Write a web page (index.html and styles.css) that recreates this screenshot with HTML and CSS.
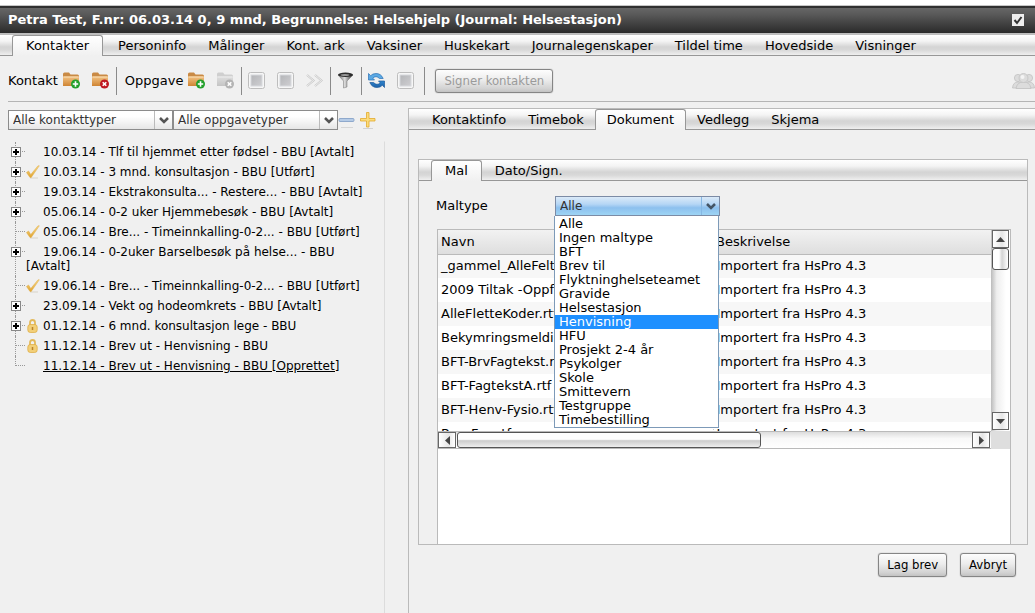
FILE: index.html
```html
<!DOCTYPE html>
<html lang="no">
<head>
<meta charset="utf-8">
<title>Journal: Helsestasjon</title>
<link rel="stylesheet" href="styles.css">
</head>
<body>
<svg class="sprites" aria-hidden="true">
  <defs>
    <linearGradient id="gFolder" x1="0" y1="0" x2="0" y2="1"><stop offset="0" stop-color="#f3c383"/><stop offset="1" stop-color="#cf8433"/></linearGradient>
    <linearGradient id="gGrey" x1="0" y1="0" x2="0" y2="1"><stop offset="0" stop-color="#dedede"/><stop offset="1" stop-color="#c4c4c4"/></linearGradient>
    <linearGradient id="gStop" x1="0" y1="0" x2="1" y2="1"><stop offset="0" stop-color="#b4b5b8"/><stop offset="1" stop-color="#cfcfd2"/></linearGradient>
    <linearGradient id="gGold" x1="0" y1="0" x2="0" y2="1"><stop offset="0" stop-color="#f8dc8c"/><stop offset="1" stop-color="#dfa32f"/></linearGradient>
    <linearGradient id="gBlue" x1="0" y1="0" x2="0" y2="1"><stop offset="0" stop-color="#2f86cf"/><stop offset="1" stop-color="#1e62a8"/></linearGradient>
    <linearGradient id="gFunnel" x1="0" y1="0" x2="1" y2="0"><stop offset="0" stop-color="#666"/><stop offset=".45" stop-color="#ddd"/><stop offset="1" stop-color="#222"/></linearGradient>
  </defs>
  <symbol id="folder-add" viewBox="0 0 17 17">
    <path d="M0 13V2Q0 .5 1.500 .5H6L7.500 2.500h7Q16 2.500 16 4v9z" fill="#c98a45"/>
    <path d="M0 4.500h16v9.500H0z" fill="url(#gFolder)"/><path d="M.5 5h15" stroke="#fae0b8"/>
    <circle cx="12.500" cy="12" r="4.500" fill="#23a02c"/><path d="M12.500 9.300v5.400M9.800 12h5.400" stroke="#fff" stroke-width="1.600"/>
  </symbol>
  <symbol id="folder-del" viewBox="0 0 17 17">
    <path d="M0 13V2Q0 .5 1.500 .5H6L7.500 2.500h7Q16 2.500 16 4v9z" fill="#c98a45"/>
    <path d="M0 4.500h16v9.500H0z" fill="url(#gFolder)"/><path d="M.5 5h15" stroke="#fae0b8"/>
    <circle cx="12.500" cy="12" r="4.500" fill="#bf1722"/><path d="M10.700 10.200l3.600 3.600M14.300 10.200l-3.600 3.600" stroke="#fff" stroke-width="1.600"/>
  </symbol>
  <symbol id="folder-off" viewBox="0 0 17 17">
    <path d="M0 13V2Q0 .5 1.500 .5H6L7.500 2.500h7Q16 2.500 16 4v9z" fill="#cfcfcf"/>
    <path d="M0 4.500h16v9.500H0z" fill="url(#gGrey)"/><path d="M.5 5h15" stroke="#eee"/>
    <circle cx="12.500" cy="12" r="4.500" fill="#b4b4b4"/><path d="M10.700 10.200l3.600 3.600M14.300 10.200l-3.600 3.600" stroke="#fff" stroke-width="1.600"/>
  </symbol>
  <symbol id="stop" viewBox="0 0 17 17">
    <rect x=".5" y=".5" width="16" height="16" rx="2" fill="#f6f6f6" stroke="#bdbdbd"/>
    <rect x="3" y="3" width="11" height="11" fill="url(#gStop)" stroke="#d6d8dc"/>
  </symbol>
  <symbol id="forward" viewBox="0 0 17 17">
    <path d="M1 3l6.500 5.500L1 14M9 3l6.500 5.500L9 14" fill="none" stroke="#c6c6c6" stroke-width="2"/><path d="M1 3l6.500 5.500L1 14M9 3l6.500 5.500L9 14" fill="none" stroke="#f8f8f8" stroke-width=".8"/>
  </symbol>
  <symbol id="filter" viewBox="0 0 17 17">
    <path d="M1 3l5.500 6v7l3.500-1V9L16 3z" fill="url(#gFunnel)" stroke="#777" stroke-width=".5"/><ellipse cx="8.500" cy="2.800" rx="7.500" ry="2.200" fill="#2c2c2c"/><ellipse cx="8" cy="3" rx="4.500" ry=".8" fill="#bbb"/>
  </symbol>
  <symbol id="refresh" viewBox="0 0 17 17">
    <path d="M.5 1.500v6.500h6L4.800 6.200Q8 3 11.500 6.500h3.700Q13 1.500 8 1.500 4.500 1.500 2.700 3.700z" fill="#5ba9e4" stroke="#2a70b4" stroke-width=".7"/>
    <path d="M16.500 15.500V9h-6l1.700 1.800Q9 14 5.500 10.500H1.800Q4 15.500 9 15.500q3.500 0 5.300-2.200z" fill="url(#gBlue)" stroke="#1f5c9c" stroke-width=".7"/>
  </symbol>
  <symbol id="people" viewBox="0 0 23 17">
    <g fill="#dcdcdc" stroke="#c2c2c2" stroke-width=".8"><circle cx="6" cy="6" r="3.600"/><circle cx="17" cy="6" r="3.600"/><path d="M.5 16Q1 10 6 10t6 6zM11 16q1-6 6-6t5.500 6z"/><path d="M4 16.500q1-6.500 7.500-6.500t7.500 6.500z"/><circle cx="11.500" cy="6" r="4.500"/></g><circle cx="10.500" cy="5" r="2" fill="#f4f4f4"/>
  </symbol>
  <symbol id="tick" viewBox="0 0 14 14">
    <path d="M4 13h8" stroke="#d8d3c8"/><path d="M.5 7.500L2.500 6l2.300 3.500L12 .8h1.300L5.200 12.500H4z" fill="url(#gGold)" stroke="#e0ab42" stroke-width=".5"/>
  </symbol>
  <symbol id="lock" viewBox="0 0 14 14">
    <path d="M4 7V3.500Q4 1 6.500 1T9 3.500V7" fill="none" stroke="#e2b95c" stroke-width="1.800"/>
    <rect x="1.800" y="5.500" width="9.400" height="8" rx="2.500" fill="#f2cf78" stroke="#dda93c" stroke-width=".7"/><path d="M6.500 8v3" stroke="#b9822a" stroke-width="1.500"/>
  </symbol>
  <symbol id="minus" viewBox="0 0 17 17"><path d="M3 15.500h12" stroke="#d6d6d6"/><rect x="1" y="6.500" width="15" height="3" rx="1" fill="#b5cbe6" stroke="#7e9cc4" stroke-width=".8"/></symbol>
  <symbol id="plus" viewBox="0 0 17 17"><path d="M4 16.500h10" stroke="#d2d2d2"/><path d="M7.500 .5h2.500v6h6v2.500h-6v6H7.500V9h-6V6.500h6z" fill="#fbdc7c" stroke="#e3a92b" stroke-width=".8"/></symbol>
</svg>

<header class="titlebar">
  <h1 class="title">Petra Test, F.nr: 06.03.14 0, 9 mnd, Begrunnelse: Helsehjelp (Journal: Helsestasjon)</h1>
  <input class="title-check" type="checkbox" checked aria-label="Aktiv journal">
</header>

<nav class="tabs main-tabs" aria-label="Journal">
  <a class="tab active" href="#">Kontakter</a><a class="tab" href="#">Personinfo</a><a class="tab" href="#">Målinger</a><a class="tab" href="#">Kont. ark</a><a class="tab" href="#">Vaksiner</a><a class="tab" href="#">Huskekart</a><a class="tab" href="#">Journalegenskaper</a><a class="tab" href="#">Tildel time</a><a class="tab" href="#">Hovedside</a><a class="tab" href="#">Visninger</a>
</nav>

<div class="toolbar">
  <div class="group first"><span class="group-label">Kontakt</span>
    <button class="tool" aria-label="Ny kontakt"><svg class="icon"><use href="#folder-add"/></svg></button>
    <button class="tool" aria-label="Slett kontakt"><svg class="icon"><use href="#folder-del"/></svg></button></div>
  <div class="group labelled"><span class="group-label">Oppgave</span>
    <button class="tool" aria-label="Ny oppgave"><svg class="icon"><use href="#folder-add"/></svg></button>
    <button class="tool" aria-label="Slett oppgave" disabled><svg class="icon"><use href="#folder-off"/></svg></button></div>
  <div class="group">
    <button class="tool" aria-label="Stopp" disabled><svg class="icon"><use href="#stop"/></svg></button>
    <button class="tool" aria-label="Avslutt" disabled><svg class="icon"><use href="#stop"/></svg></button>
    <button class="tool" aria-label="Neste" disabled><svg class="icon"><use href="#forward"/></svg></button></div>
  <div class="group"><button class="tool" aria-label="Filter"><svg class="icon"><use href="#filter"/></svg></button></div>
  <div class="group last">
    <button class="tool" aria-label="Oppdater"><svg class="icon"><use href="#refresh"/></svg></button>
    <button class="tool" aria-label="Stans" disabled><svg class="icon"><use href="#stop"/></svg></button></div>
  <button class="btn sign" disabled>Signer kontakten</button>
  <button class="tool people" aria-label="Gruppe" disabled><svg class="icon-wide"><use href="#people"/></svg></button>
</div>

<main class="workspace">
  <aside class="sidebar">
    <div class="filters">
      <select class="drop" aria-label="Kontakttype"><option>Alle kontakttyper</option></select>
      <select class="drop" aria-label="Oppgavetype"><option>Alle oppgavetyper</option></select>
      <button class="tool" aria-label="Lukk alle"><svg class="icon"><use href="#minus"/></svg></button>
      <button class="tool" aria-label="Åpne alle"><svg class="icon"><use href="#plus"/></svg></button>
    </div>
    <ul class="tree">
      <li class="node"><button class="expand" aria-label="Utvid"></button><span class="mark"></span>10.03.14 - Tlf til hjemmet etter fødsel - BBU [Avtalt]</li>
      <li class="node"><button class="expand" aria-label="Utvid"></button><span class="mark"><svg class="mark-icon"><use href="#tick"/></svg></span>10.03.14 - 3 mnd. konsultasjon - BBU [Utført]</li>
      <li class="node"><button class="expand" aria-label="Utvid"></button><span class="mark"></span>19.03.14 - Ekstrakonsulta... - Restere... - BBU [Avtalt]</li>
      <li class="node"><button class="expand" aria-label="Utvid"></button><span class="mark"></span>05.06.14 - 0-2 uker Hjemmebesøk - BBU [Avtalt]</li>
      <li class="node"><span class="mark"><svg class="mark-icon"><use href="#tick"/></svg></span>05.06.14 - Bre... - Timeinnkalling-0-2... - BBU [Utført]</li>
      <li class="node"><button class="expand" aria-label="Utvid"></button><span class="mark"></span>19.06.14 - 0-2uker Barselbesøk på helse... - BBU [Avtalt]</li>
      <li class="node"><span class="mark"><svg class="mark-icon"><use href="#tick"/></svg></span>19.06.14 - Bre... - Timeinnkalling-0-2... - BBU [Utført]</li>
      <li class="node"><button class="expand" aria-label="Utvid"></button><span class="mark"></span>23.09.14 - Vekt og hodeomkrets - BBU [Avtalt]</li>
      <li class="node"><button class="expand" aria-label="Utvid"></button><span class="mark"><svg class="mark-icon"><use href="#lock"/></svg></span>01.12.14 - 6 mnd. konsultasjon lege - BBU</li>
      <li class="node"><span class="mark"><svg class="mark-icon"><use href="#lock"/></svg></span>11.12.14 - Brev ut - Henvisning - BBU</li>
      <li class="node"><span class="mark"></span><span class="current">11.12.14 - Brev ut - Henvisning - BBU [Opprettet]</span></li>
    </ul>
  </aside>

  <section class="detail">
    <nav class="tabs detail-tabs" aria-label="Kontakt">
      <a class="tab" href="#">Kontaktinfo</a><a class="tab" href="#">Timebok</a><a class="tab active" href="#">Dokument</a><a class="tab" href="#">Vedlegg</a><a class="tab" href="#">Skjema</a>
    </nav>
    <div class="panel">
      <nav class="tabs panel-tabs" aria-label="Dokument"><a class="tab active" href="#">Mal</a><a class="tab" href="#">Dato/Sign.</a></nav>
      <div class="field">
        <label class="field-label" for="maltype">Maltype</label>
        <div class="combo">
          <select class="drop open" id="maltype"><option>Alle</option></select>
          <ul class="menu" role="listbox" aria-label="Maltype">
            <li role="option">Alle</li><li role="option">Ingen maltype</li><li role="option">BFT</li><li role="option">Brev til</li><li role="option">Flyktninghelseteamet</li><li role="option">Gravide</li><li role="option">Helsestasjon</li><li role="option" class="chosen" aria-selected="true">Henvisning</li><li role="option">HFU</li><li role="option">Prosjekt 2-4 år</li><li role="option">Psykolger</li><li role="option">Skole</li><li role="option">Smittevern</li><li role="option">Testgruppe</li><li role="option">Timebestilling</li>
          </ul>
        </div>
      </div>
      <div class="listing">
        <div class="view">
          <div class="clip">
            <table class="files">
              <thead><tr><th>Navn</th><th>Beskrivelse</th></tr></thead>
              <tbody>
                <tr><td>_gammel_AlleFelt.rtf</td><td>Importert fra HsPro 4.3</td></tr>
                <tr><td>2009 Tiltak -Oppflg.rtf</td><td>Importert fra HsPro 4.3</td></tr>
                <tr><td>AlleFletteKoder.rtf</td><td>Importert fra HsPro 4.3</td></tr>
                <tr><td>Bekymringsmelding.rtf</td><td>Importert fra HsPro 4.3</td></tr>
                <tr><td>BFT-BrvFagtekst.rtf</td><td>Importert fra HsPro 4.3</td></tr>
                <tr><td>BFT-FagtekstA.rtf</td><td>Importert fra HsPro 4.3</td></tr>
                <tr><td>BFT-Henv-Fysio.rtf</td><td>Importert fra HsPro 4.3</td></tr>
                <tr><td>Bup-Fys.rtf</td><td>Importert fra HsPro 4.3</td></tr>
              </tbody>
            </table>
          </div>
          <div class="vbar"><button class="arrow" aria-label="Opp"><svg class="arrow-icon" viewBox="0 0 9 9"><path d="M0 7l4.500-5L9 7z"/></svg></button><div class="vthumb"></div><button class="arrow end" aria-label="Ned"><svg class="arrow-icon" viewBox="0 0 9 9"><path d="M0 2l4.500 5L9 2z"/></svg></button></div>
          <div class="hbar"><button class="arrow" aria-label="Venstre"><svg class="arrow-icon" viewBox="0 0 9 9"><path d="M7 0L2 4.500 7 9z"/></svg></button><div class="hthumb"></div><button class="arrow end" aria-label="Høyre"><svg class="arrow-icon" viewBox="0 0 9 9"><path d="M2 0l5 4.500L2 9z"/></svg></button></div>
          <div class="corner"></div>
        </div>
      </div>
    </div>
    <div class="actions"><button class="btn">Lag brev</button><button class="btn">Avbryt</button></div>
  </section>
</main>
</body>
</html>
```
FILE: styles.css
```css
* { box-sizing: border-box; }
body {
  margin: 0;
  padding-top: 5px;
  min-height: 100vh;
  display: flex;
  flex-direction: column;
  background: linear-gradient(#fff 5px, #f0f0f0 5px);
  color: #000;
  font: 13px/16px Verdana, "DejaVu Sans", sans-serif;
  overflow-x: hidden;
}
ul { list-style: none; margin: 0; padding: 0; }
button { font: inherit; }
.sprites { position: absolute; width: 0; height: 0; }

.titlebar {
  display: flex;
  align-items: center;
  height: 30px;
  padding: 0 11px 0 8px;
  border-top: 1px solid #c6c6c6;
  border-bottom: 2px solid #bdbdbd;
  background: linear-gradient(#303030 2px, #666 2px, #5a5a5a 30%, #2a2a2a);
}
.title { margin: 0; flex: 1; color: #fff; font-size: 13px; line-height: 16px; white-space: nowrap; }
.title-check {
  appearance: none;
  width: 12px;
  height: 12px;
  margin: 0;
  background: #eee;
}
.title-check:checked {
  background: #eee url("data:image/svg+xml,%3Csvg xmlns='http://www.w3.org/2000/svg' width='12' height='12'%3E%3Cpath d='M2.500 6l2.500 3 4.500-6' fill='none' stroke='%23333' stroke-width='2'/%3E%3C/svg%3E");
}

.tabs {
  display: flex;
  height: 21px;
  border-bottom: 1px solid #979797;
  background: linear-gradient(#fff, #f4f4f4 30%, #d4d4d4 60%, #d8d8d8 75%, #efefef);
}
.tab { padding: 3px 11px 1px; color: #000; text-decoration: none; white-space: nowrap; }
.tab.active {
  height: 21px;
  padding: 2px 13px 1px;
  border: 1px solid #979797;
  border-bottom: 0;
  border-radius: 3px 3px 0 0;
  background: linear-gradient(#fff, #f0f0f0);
}
.main-tabs { padding-left: 12px; }
.main-tabs .active { margin-right: 4px; }
.detail-tabs, .panel-tabs { height: 22px; padding-left: 12px; border-top: 1px solid #bababa; }
.detail-tabs .active { padding-left: 11px; padding-right: 11px; }
.panel-tabs .active { margin-right: 2px; }

.toolbar {
  display: flex;
  align-items: center;
  height: 46px;
  margin-left: 8px;
  padding-top: 4px;
  border-bottom: 1px solid #b4b4b4;
}
.group { display: flex; align-items: center; gap: 12px; height: 28px; padding: 0 7px 0 6px; border-right: 1px solid #8a8a8a; }
.group.first { padding-left: 0; }
.group.labelled { padding-left: 8px; }
.group.last { padding-right: 10px; }
.group-label { margin-right: -7px; padding-top: 1px; }
.tool { display: block; padding: 0; border: 0; background: none; }
.icon { display: block; width: 17px; height: 17px; }
.icon-wide { display: block; width: 23px; height: 17px; }
.people { margin-left: auto; }

.btn {
  height: 24px;
  padding: 0 8px;
  border: 1px solid #858585;
  border-radius: 3px;
  background: linear-gradient(#fdfdfd, #ececec 45%, #d2d2d2 85%, #c2c2c2);
  box-shadow: 0 0 1px #777;
  color: #000;
  font: 13px/16px Tahoma, "DejaVu Sans Condensed", "DejaVu Sans", sans-serif;
}
.btn:disabled { color: #9a9a9a; }
.sign { margin-left: 10px; }

.workspace { flex: 1; display: flex; }
.sidebar { flex: 0 0 408px; padding: 8px 23px 0 8px; display: flex; flex-direction: column; }
.filters { display: flex; align-items: center; height: 20px; }
.filters .tool { margin-right: 4px; }
.drop {
  appearance: none;
  width: 165px;
  height: 20px;
  padding: 0 20px 0 4px;
  border: 1px solid #8c8c8c;
  border-radius: 0;
  color: #333;
  font: 12px/16px Verdana, "DejaVu Sans", sans-serif;
  background:
    url("data:image/svg+xml,%3Csvg xmlns='http://www.w3.org/2000/svg' width='18' height='18'%3E%3Cpath d='M.5 0v18' stroke='%23bbb'/%3E%3Cpath d='M6 7l4 4 4-4' fill='none' stroke='%23555' stroke-width='2.500'/%3E%3C/svg%3E") right center no-repeat,
    linear-gradient(#fff 30%, #e6e6e6);
}
.drop.open {
  display: block;
  width: 100%;
  border-color: #7c8ba5;
  background:
    url("data:image/svg+xml,%3Csvg xmlns='http://www.w3.org/2000/svg' width='18' height='18'%3E%3Cpath d='M.5 0v18' stroke='%2386b8e4'/%3E%3Cpath d='M6 7l4 4 4-4' fill='none' stroke='%23456' stroke-width='2.500'/%3E%3C/svg%3E") right center no-repeat,
    linear-gradient(#dbeaf8, #b5d6f5 40%, #8dc0ee 60%, #9dd4f4);
}

.tree { flex: 1; margin-top: 11px; border: solid #dcdcdc; border-width: 1px 1px 0 0; border-color: #f0f0f0 #dcdcdc; font-size: 12px; }
.node { position: relative; padding: 3px 5px 3px 18px; line-height: 14px; }
.node::before { content: ""; position: absolute; left: 7px; top: 0; bottom: 0; border-left: 1px dotted #999; }
.node:last-child::before { bottom: 10px; }
.node::after { content: ""; position: absolute; left: 8px; top: 9px; width: 9px; border-top: 1px dotted #999; }
.expand {
  position: absolute;
  z-index: 1;
  left: 3px;
  top: 5px;
  width: 10px;
  height: 10px;
  padding: 0;
  border: 1px solid #888;
  background: linear-gradient(#000, #000) center / 6px 2px no-repeat, linear-gradient(#000, #000) center / 2px 6px no-repeat, #fff;
}
.mark { display: inline-block; width: 17px; height: 14px; vertical-align: top; }
.mark-icon { display: block; width: 14px; height: 14px; }
.current { text-decoration: underline; }

.detail { flex: 1; min-width: 0; display: flex; flex-direction: column; margin-top: 6px; border-left: 1px solid #bababa; }
.panel { flex: 1; display: flex; flex-direction: column; margin: 29px 7px 0 9px; border: 1px solid #bababa; border-top: 0; }
.field { display: flex; align-items: center; margin: 15px 0 13px 17px; }
.field-label { width: 119px; }
.combo { position: relative; width: 165px; }
.menu { position: absolute; z-index: 2; top: 100%; left: -1px; width: 165px; padding-top: 1px; border: 1px solid #7d9ab8; border-top: 0; background: #fff; line-height: 14px; }
.menu li { padding-left: 4px; }
.menu .chosen { background: #1e90ff; color: #fff; }

.listing { flex: 1; margin: 0 16px 0 18px; border: 1px solid #bababa; border-bottom: 0; background: #fff; }
.view { display: grid; grid-template: 201px 18px / 1fr 19px; }
.clip { overflow: hidden; }
.files { width: 100%; table-layout: fixed; border-collapse: collapse; }
.files th, .files td { height: 24px; padding: 0 3px; text-align: left; font-weight: normal; white-space: nowrap; overflow: hidden; }
.files th { background: linear-gradient(#f2f2f2, #dedede); border-bottom: 1px solid #bababa; }
.files th:first-child { width: 275px; }
.files td:first-child { border-right: 1px dotted #ccc; }
.files tbody tr:nth-child(odd) { background: #f7f7f7; }

.arrow { display: grid; place-items: center; width: 17px; height: 17px; padding: 0; border: 1px solid #666; background: linear-gradient(90deg, #fff, #e6e6e6 60%, #fff); }
.arrow-icon { width: 9px; height: 9px; fill: #444; }
.arrow.end { margin-left: auto; }
.vbar { display: flex; flex-direction: column; padding: 0 1px 1px; background: linear-gradient(90deg, #bbb, #eee 30%, #fff 80%); }
.vbar .arrow { margin-left: 0; height: 18px; }
.vbar .arrow.end { margin-top: auto; }
.vthumb { width: 17px; height: 22px; border: 1px solid #555; border-radius: 3px; background: linear-gradient(90deg, #fff, #fff 40%, #d4d4d4 60%, #fff); }
.hbar { display: flex; padding-right: 1px; border-top: 1px solid #bababa; border-bottom: 1px solid #bababa; background: linear-gradient(#ddd, #f8f8f8 40%, #fff); }
.hbar .arrow { height: 16px; width: 18px; }
.hthumb { width: 55%; margin-left: 1px; border: 1px solid #555; border-radius: 3px; background: linear-gradient(#fff 45%, #ccc 55%, #eee); }
.corner { background: #dedede; }

.actions { display: flex; justify-content: flex-end; gap: 13px; padding: 8px 19px 36px; }
```
